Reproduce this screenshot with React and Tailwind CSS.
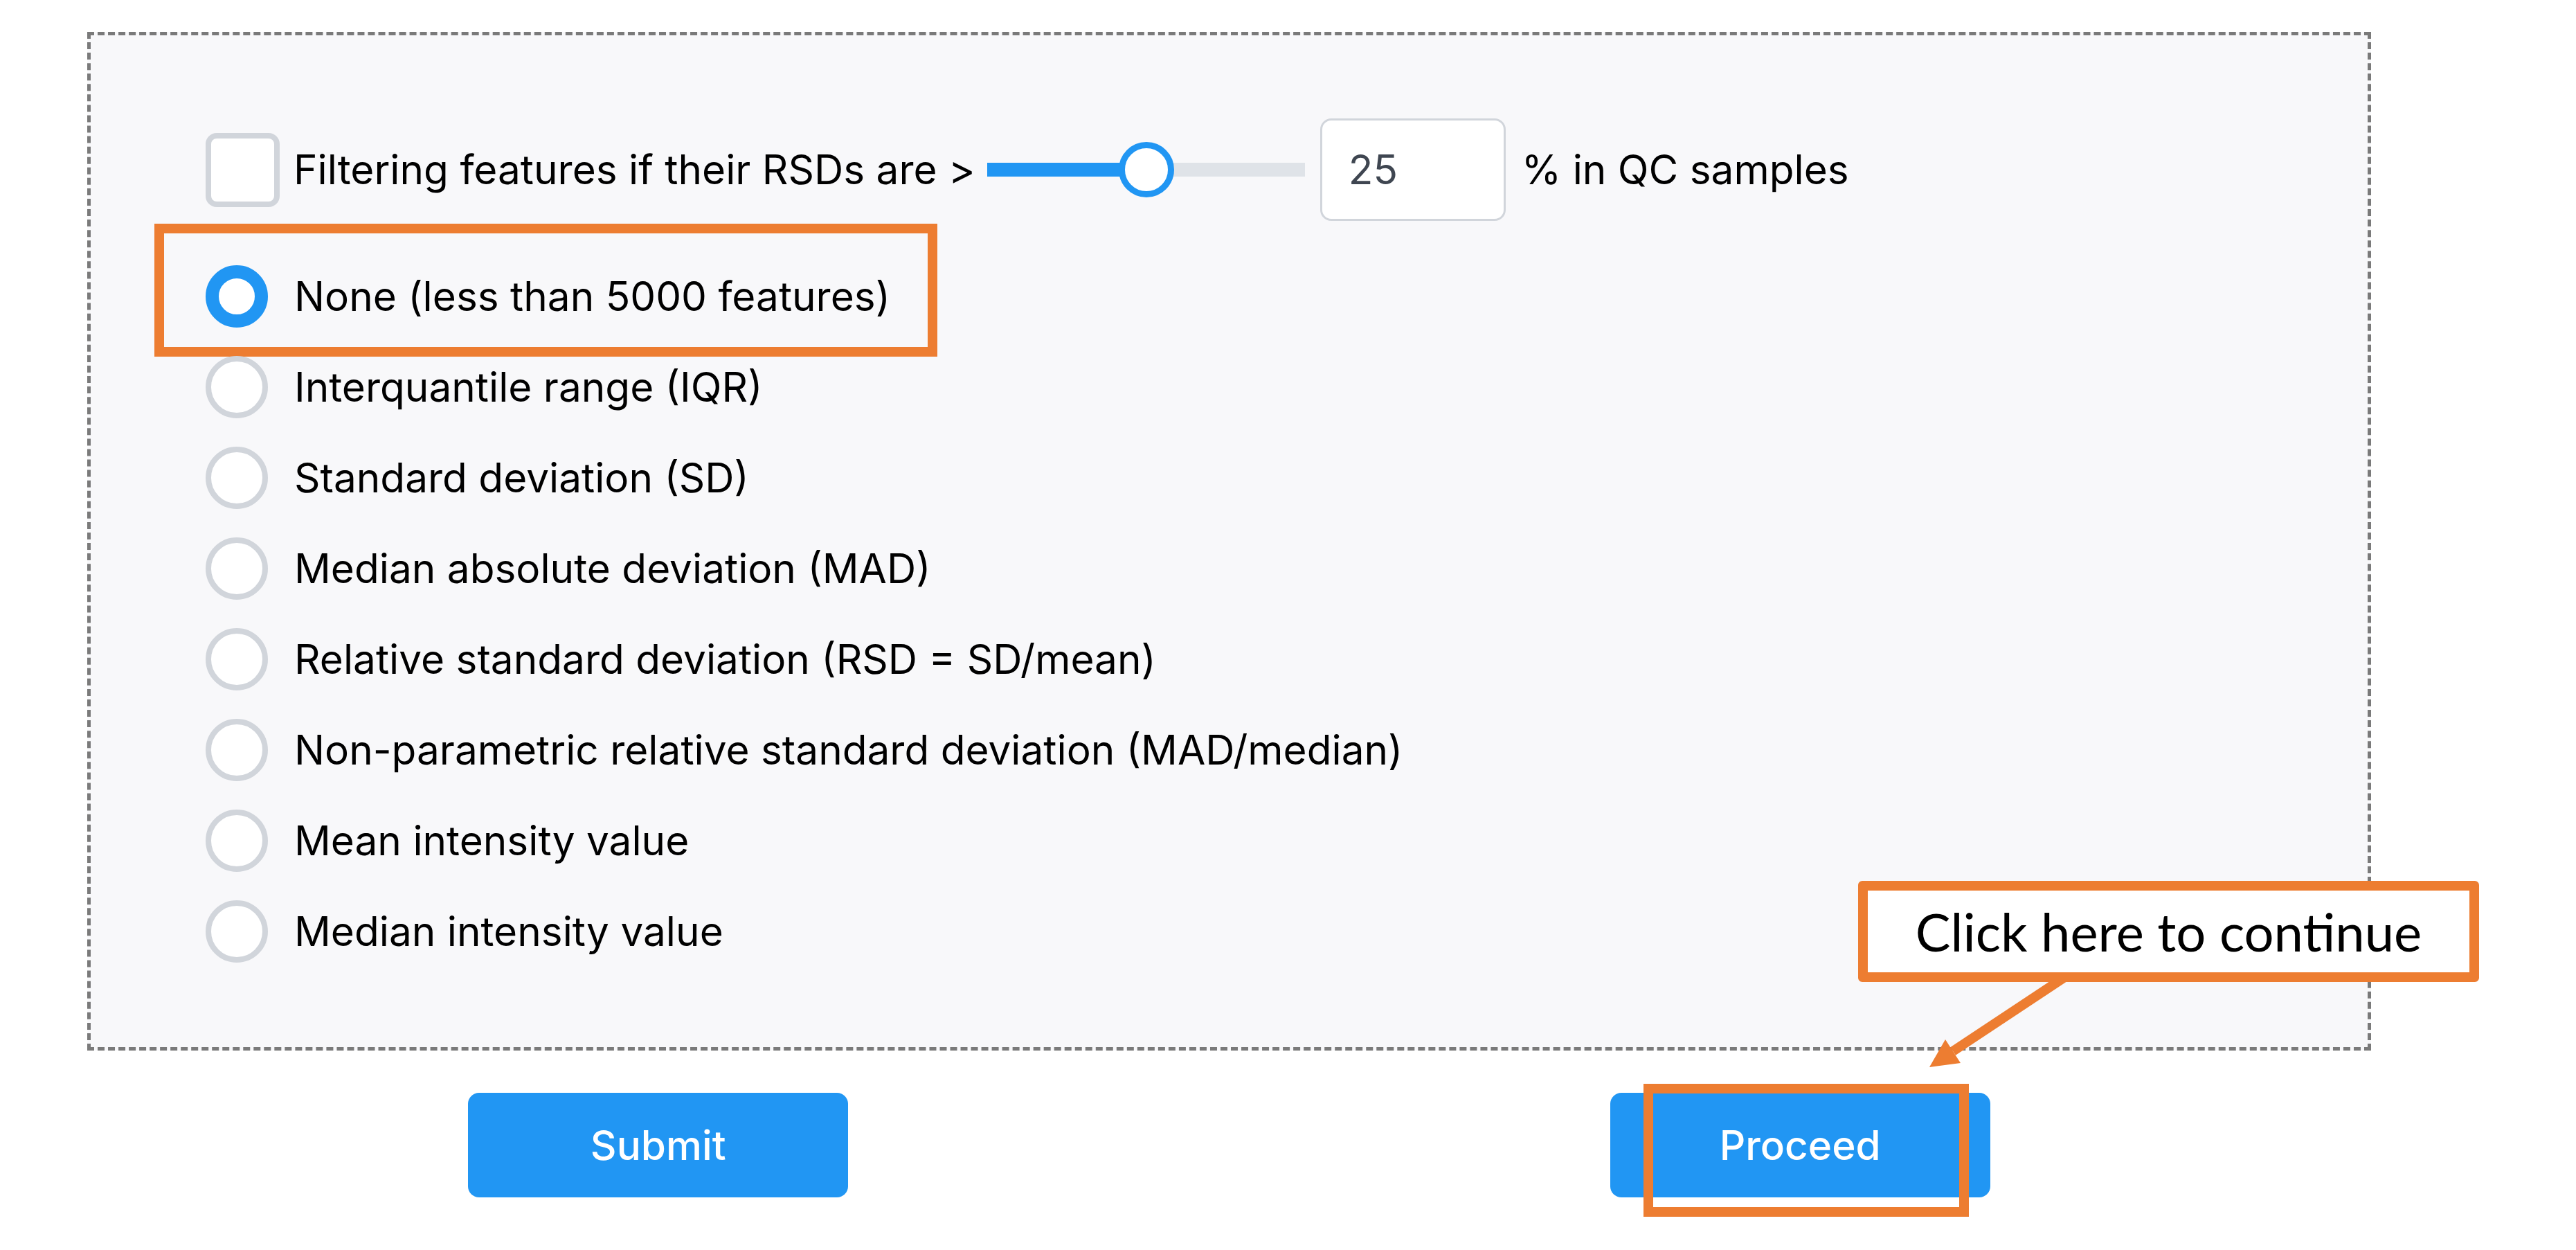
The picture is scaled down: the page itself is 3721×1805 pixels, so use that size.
import React from 'react';

const OPTIONS = [
  'None (less than 5000 features)',
  'Interquantile range (IQR)',
  'Standard deviation (SD)',
  'Median absolute deviation (MAD)',
  'Relative standard deviation (RSD = SD/mean)',
  'Non-parametric relative standard deviation (MAD/median)',
  'Mean intensity value',
  'Median intensity value',
];

function Radio({ checked }) {
  return checked ? (
    <span className="block w-[90px] h-[90px] shrink-0 rounded-full border-[19px] border-[#2196f3] bg-white" />
  ) : (
    <span className="block w-[90px] h-[90px] shrink-0 rounded-full border-[8px] border-[#d1d5db] bg-white" />
  );
}

export default function App() {
  return (
    <div className="relative w-[3721px] h-[1805px] bg-white text-black text-[58.5px] font-['Inter',sans-serif]">
      <div className="pl-[126px] pt-[46px] w-[3425px]">
        <div className="border-[5px] border-dashed border-[#7a7a7a] bg-[#f8f8fa] pl-[166px] pt-[120px] pb-[102px]">
          {/* RSD filter row */}
          <div className="flex items-center h-[148px]">
            <span className="block w-[107px] h-[107px] shrink-0 rounded-[16px] border-[8px] border-[#d1d5db] bg-white" />
            <span className="ml-[20px] whitespace-nowrap">Filtering features if their RSDs are &gt;</span>
            <div className="relative ml-[17px] w-[459px] h-[20px] bg-[#dfe3e8]">
              <div className="h-full w-[230px] bg-[#2196f3]" />
              <span className="absolute left-[190px] top-1/2 -translate-y-1/2 block w-[80px] h-[80px] rounded-full border-[9px] border-[#2196f3] bg-white" />
            </div>
            <div className="ml-[22px] w-[268px] h-[148px] flex items-center pl-[38px] rounded-[16px] border-[3px] border-[#d1d5db] bg-white text-[#3f4651]">
              25
            </div>
            <span className="ml-[23px] whitespace-nowrap">% in QC samples</span>
          </div>

          {/* filter options */}
          <div className="mt-[43px] flex flex-col">
            {OPTIONS.map((label, i) => (
              <div key={label} className="relative flex items-center gap-[38px] h-[131px]">
                <Radio checked={i === 0} />
                <span className="whitespace-nowrap">{label}</span>
                {i === 0 && (
                  <div className="absolute left-[-74px] top-[-39px] w-[1131px] h-[192px] border-[14px] border-[#ed7d31]" />
                )}
              </div>
            ))}
          </div>
        </div>

        <div className="grid grid-cols-2 mt-[61px]">
          <div className="flex justify-center">
            <button className="w-[549px] h-[151px] rounded-[16px] bg-[#2196f3] text-white font-medium">
              Submit
            </button>
          </div>
          <div className="flex justify-center">
            <div className="relative">
              <button className="w-[549px] h-[151px] rounded-[16px] bg-[#2196f3] text-white font-medium">
                Proceed
              </button>
              <div className="absolute left-[48px] top-[-13px] w-[470px] h-[192px] border-[14px] border-[#ed7d31]" />
            </div>
          </div>
        </div>
      </div>

      {/* annotation arrow */}
      <svg className="absolute left-[2760px] top-[1400px]" width="240" height="160" viewBox="0 0 240 160">
        <line x1="224" y1="10" x2="61" y2="118" stroke="#ed7d31" strokeWidth="14" />
        <polygon points="27,141 50,101 72,135" fill="#ed7d31" />
      </svg>

      <div className="absolute left-[2684px] top-[1272px] w-[897px] h-[146px] flex items-center justify-center rounded-[6px] border-[14px] border-[#ed7d31] bg-white font-['Lato',sans-serif] text-[76px] text-black">
        Click here to continue
      </div>
    </div>
  );
}
